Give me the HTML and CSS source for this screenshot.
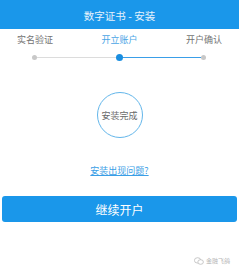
FILE: index.html
```html
<!DOCTYPE html>
<html lang="zh">
<head>
<meta charset="utf-8">
<link rel="stylesheet" href="styles.css">
</head>
<body>
<div class="page">
  <header class="topbar">数字证书 - 安装</header>
  <div class="steps">
    <span class="step">实名验证</span>
    <span class="step active">开立账户</span>
    <span class="step">开户确认</span>
  </div>
  <div class="track">
    <span class="dot"></span>
    <span class="line"></span>
    <span class="dot current"></span>
    <span class="line done"></span>
    <span class="dot"></span>
  </div>
  <div class="status">
    <div class="ring">安装完成</div>
  </div>
  <a class="help" href="#">安装出现问题?</a>
  <button class="next">继续开户</button>
  <div class="mark">
    <svg width="10" height="8" viewBox="0 0 10 8"><ellipse cx="3.6" cy="3.4" rx="3.2" ry="2.7" fill="none" stroke="#bbb" stroke-width="0.8"/><ellipse cx="6.6" cy="5" rx="2.8" ry="2.3" fill="#fff" stroke="#bbb" stroke-width="0.8"/></svg>
    <span>金融飞鸽</span>
  </div>
</div>
</body>
</html>
```

FILE: styles.css
```css
html, body {
  margin: 0;
  padding: 0;
  background: #ffffff;
}
.page {
  width: 239px;
  height: 274px;
  display: flex;
  flex-direction: column;
  font-family: "Noto Sans CJK SC", "Noto Sans", sans-serif;
  overflow: hidden;
}
.topbar {
  height: 29px;
  background: #1a97ea;
  color: #e6f2fc;
  font-size: 10.5px;
  line-height: 29px;
  text-align: center;
  padding-top: 1px;
  box-sizing: border-box;
}
.steps {
  display: flex;
  justify-content: space-between;
  padding: 0 17px;
  margin-top: 4px;
  font-size: 9px;
  line-height: 14px;
  color: #737373;
}
.step.active {
  color: #4aa6e6;
}
.track {
  display: flex;
  align-items: center;
  padding: 0 33px 0 32px;
  margin-top: 7px;
  height: 7px;
}
.dot {
  width: 5px;
  height: 5px;
  border-radius: 50%;
  background: #c8c8c8;
  flex: none;
}
.dot.current {
  width: 7px;
  height: 7px;
  background: #1a8ee0;
}
.line {
  flex: 1;
  height: 1px;
  background: #dcdcdc;
}
.line.done {
  background: #3a9ee8;
}
.status {
  display: flex;
  justify-content: center;
  margin-top: 31px;
}
.ring {
  width: 46px;
  height: 46px;
  box-sizing: border-box;
  border: 1px solid #63b6ea;
  border-radius: 50%;
  display: flex;
  align-items: center;
  justify-content: center;
  font-size: 9px;
  color: #6a6a6a;
}
.help {
  align-self: center;
  margin-top: 27px;
  font-size: 9px;
  line-height: 12px;
  color: #3a9ee6;
  text-decoration: underline;
}
.next {
  margin: 19px 2px 0;
  height: 26px;
  border: none;
  border-radius: 3px;
  background: #1a97ea;
  color: #ffffff;
  font-family: "Noto Sans CJK SC", "Noto Sans", sans-serif;
  font-size: 12px;
  padding: 0;
}
.mark {
  display: flex;
  align-items: center;
  justify-content: flex-end;
  gap: 2px;
  margin-top: 34px;
  padding-right: 9px;
  font-size: 6px;
  color: #b5b5b5;
}
```
